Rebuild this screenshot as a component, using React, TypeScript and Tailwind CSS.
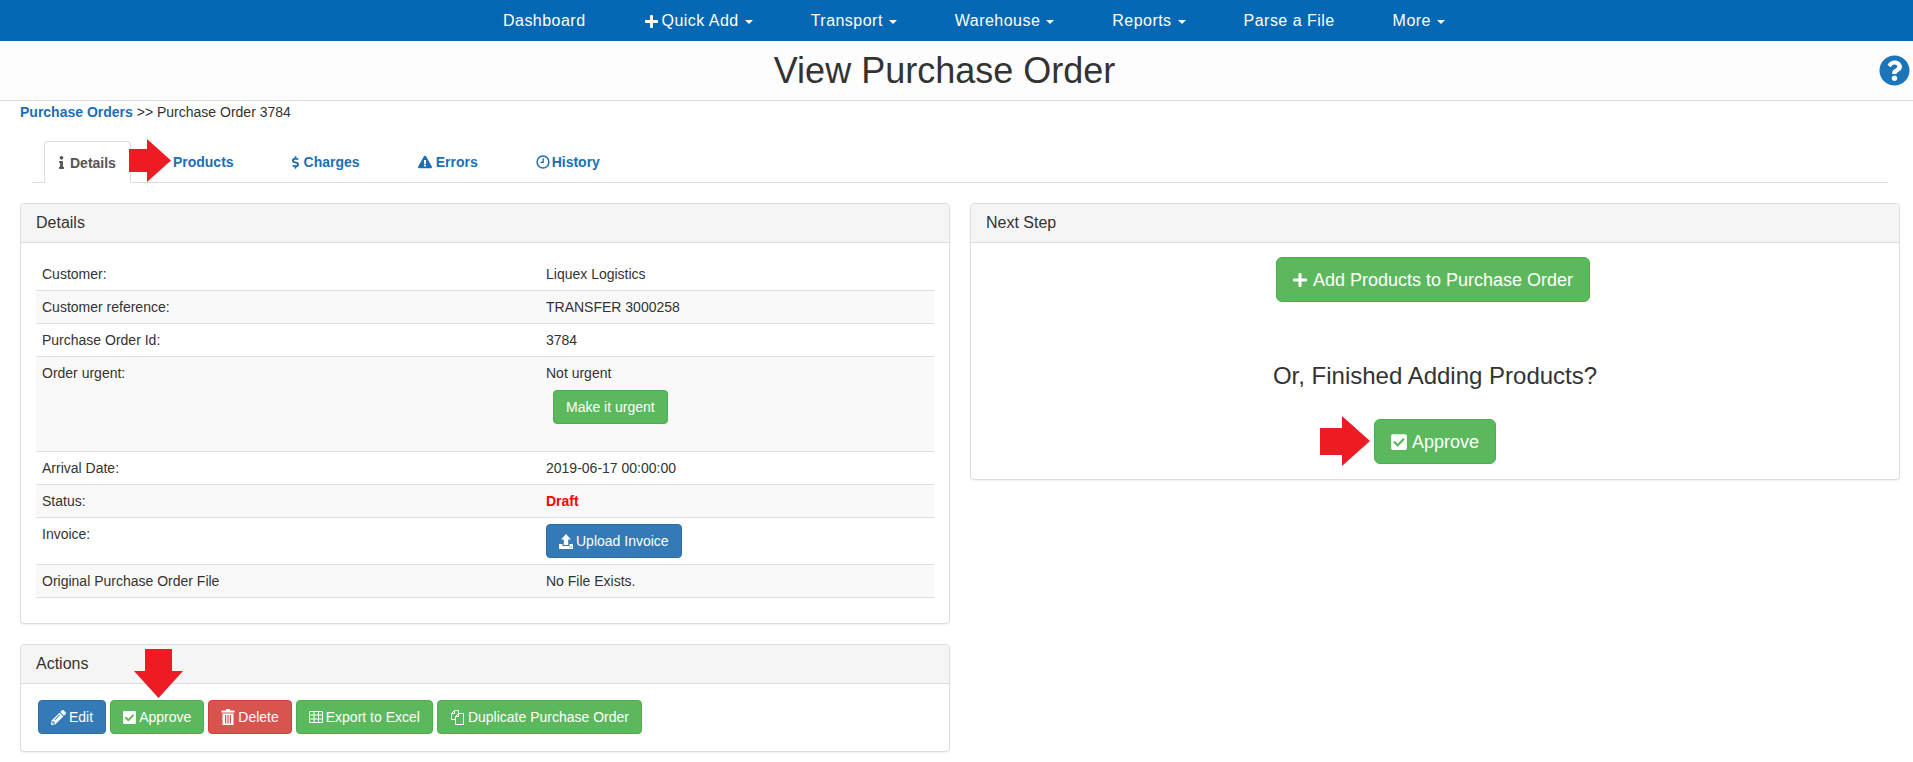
import { FaCheckSquare, FaDollarSign, FaExclamationTriangle, FaInfo, FaPencilAlt, FaPlus, FaQuestionCircle } from "react-icons/fa";

const rowCell = "px-[6px] py-[6px] align-top border-b border-[#ddd] leading-5";
const green = "bg-[#5cb85c] border-[#4cae4c]";
const blue = "bg-[#337ab7] border-[#2e6da4]";
const red = "bg-[#d9534f] border-[#d43f3a]";

// glyphicons the icon packages don't have in this shape
function TrashIcon() {
  return (
    <svg width="14" height="16" viewBox="0 0 14 16" fill="currentColor">
      <path d="M5 0h4v1.5h4.5v2H.5v-2H5z" />
      <path fillRule="evenodd" d="M1.5 4.5h11V16h-11zM4 6v8.5h1.2V6zM6.4 6v8.5h1.2V6zM8.8 6v8.5H10V6z" />
    </svg>
  );
}

function GridIcon() {
  return (
    <svg width="14" height="12" viewBox="0 0 14 12" fill="none" stroke="currentColor">
      <path d="M.5.5h13v11H.5zM.5 4h13M.5 8h13M5 .5v11M9.5.5v11" />
    </svg>
  );
}

function DuplicateIcon() {
  return (
    <svg width="15" height="15" viewBox="0 0 15 15" fill="none" stroke="currentColor">
      <path d="M5 9.5H1.5v-6l3-3h4v3" />
      <path d="M1.5 3.5h3v-3" />
      <path d="M5.5 6.5l3-3h5v11h-8z" />
      <path d="M5.5 6.5h3v-3" />
    </svg>
  );
}

function UploadIcon() {
  return (
    <svg width="14" height="15" viewBox="0 0 14 15" fill="currentColor">
      <path d="M7 0l5 5.5H9.2V11H4.8V5.5H2z" />
      <path fillRule="evenodd" d="M0 10h3.5v2h7v-2H14v5H0zM10.5 12.6v1h1v-1zM12.2 12.6v1h1v-1z" />
    </svg>
  );
}

function ClockIcon() {
  return (
    <svg width="14" height="14" viewBox="0 0 14 14" fill="none" stroke="currentColor">
      <circle cx="7" cy="7" r="5.9" strokeWidth="1.5" />
      <path d="M7.2 3.2V7.4H4.4" strokeWidth="1.3" />
    </svg>
  );
}

function Btn({ color, icon, label, className = "" }: { color: string; icon?: React.ReactNode; label: string; className?: string }) {
  return (
    <button className={`inline-flex items-center justify-center gap-[3px] h-[34px] px-3 rounded border text-white text-sm ${color} ${className}`}>
      {icon}
      {label}
    </button>
  );
}

function NavItem({ label, caret, plus }: { label: string; caret?: boolean; plus?: boolean }) {
  return (
    <a className="flex items-center pt-[1px] px-[29px] text-white text-base tracking-[0.47px] whitespace-nowrap">
      {plus && <FaPlus className="text-[15px] mr-[3px]" />}
      {label}
      {caret && <span className="ml-[6px] mt-[2px] border-x-4 border-t-4 border-x-transparent border-t-white" />}
    </a>
  );
}

function Panel({ title, children, className = "" }: { title: string; children: React.ReactNode; className?: string }) {
  return (
    <div className={`border border-[#ddd] rounded bg-white shadow-[0_1px_1px_rgba(0,0,0,0.05)] ${className}`}>
      <div className="h-[39px] flex items-center px-[15px] bg-[#f5f5f5] border-b border-[#ddd] rounded-t text-base text-[#333]">{title}</div>
      {children}
    </div>
  );
}

function Row({ label, striped, children }: { label: string; striped?: boolean; children: React.ReactNode }) {
  return (
    <tr className={striped ? "bg-[#f9f9f9]" : ""}>
      <td className={`${rowCell} w-[504px]`}>{label}</td>
      <td className={rowCell}>{children}</td>
    </tr>
  );
}

function Tab({ icon, label, gap }: { icon?: React.ReactNode; label: string; gap?: string }) {
  return (
    <a className={`flex items-center pt-[1px] px-[29px] text-[#1b6fb5] font-bold text-sm ${gap ?? ""}`}>
      {icon}
      {label}
    </a>
  );
}

function RightArrow({ className, w, h, shaftTop, shaftBottom, headX }: { className: string; w: number; h: number; shaftTop: number; shaftBottom: number; headX: number }) {
  return (
    <svg className={`absolute ${className}`} width={w} height={h} viewBox={`0 0 ${w} ${h}`}>
      <path d={`M0 ${shaftTop} H${headX} V0 L${w} ${h / 2} L${headX} ${h} V${shaftBottom} H0 Z`} fill="#ed1c24" />
    </svg>
  );
}

export default function App() {
  return (
    <div className="relative min-h-[762px] bg-white text-sm text-[#333]" style={{ fontFamily: '"Liberation Sans", Arial, sans-serif' }}>
      <nav className="h-[41px] bg-[#0468b4] flex pl-[474px]">
        <NavItem label="Dashboard" />
        <NavItem label="Quick Add" caret plus />
        <NavItem label="Transport" caret />
        <NavItem label="Warehouse" caret />
        <NavItem label="Reports" caret />
        <NavItem label="Parse a File" />
        <NavItem label="More" caret />
      </nav>

      <header className="h-[60px] flex items-center bg-[#fdfdfd] border-b border-[#ddd] pl-[10px] pr-[3px]">
        <h1 className="flex-1 text-center text-[36px] leading-10 font-normal">View Purchase Order</h1>
        <FaQuestionCircle className="text-[31px] text-[#1b75bb]" />
      </header>

      <div className="px-5 h-5 pt-[1px] leading-5 text-sm">
        <a className="font-bold text-[#1b6fb5]">Purchase Orders</a> &gt;&gt; Purchase Order 3784
      </div>

      <div className="ml-8 mr-[25px] mt-5 h-[42px] flex border-b border-[#ddd]">
        <a className="flex items-center gap-[6px] ml-3 pt-[1px] pl-[14px] pr-[14px] h-[42px] font-bold text-sm text-[#555] bg-white border border-[#ddd] border-b-white rounded-t">
          <FaInfo className="text-[13px] w-[5px]" />
          Details
        </a>
        <div className="flex ml-[13px]">
          <Tab label="Products" />
          <Tab icon={<FaDollarSign className="text-[13px] w-[7px]" />} label="Charges" gap="gap-[5px]" />
          <Tab icon={<FaExclamationTriangle className="text-sm" />} label="Errors" gap="gap-1" />
          <Tab icon={<ClockIcon />} label="History" gap="gap-[2px]" />
        </div>
      </div>

      <div className="grid grid-cols-2 gap-x-5 pl-5 pr-[13px] mt-5 items-start">
        <div>
          <Panel title="Details">
            <div className="pt-[15px] pb-[25px] px-[15px]">
              <table className="w-full border-collapse">
                <tbody>
                  <Row label="Customer:">Liquex Logistics</Row>
                  <Row label="Customer reference:" striped>TRANSFER 3000258</Row>
                  <Row label="Purchase Order Id:">3784</Row>
                  <Row label="Order urgent:" striped>
                    <div>Not urgent</div>
                    <Btn color={green} label="Make it urgent" className="ml-[7px] mt-[7px] mb-[21px] flex! w-fit" />
                  </Row>
                  <Row label="Arrival Date:">2019-06-17 00:00:00</Row>
                  <Row label="Status:" striped>
                    <span className="font-bold text-[#f00]">Draft</span>
                  </Row>
                  <Row label="Invoice:">
                    <Btn color={blue} icon={<UploadIcon />} label="Upload Invoice" className="flex! w-fit" />
                  </Row>
                  <Row label="Original Purchase Order File" striped>No File Exists.</Row>
                </tbody>
              </table>
            </div>
          </Panel>
          <Panel title="Actions" className="mt-5">
            <div className="flex gap-1 pl-[17px] pt-4 pb-[17px]">
              <Btn color={blue} icon={<FaPencilAlt className="text-[15px]" />} label="Edit" />
              <Btn color={green} icon={<FaCheckSquare className="text-[15px] w-[13px]" />} label="Approve" />
              <Btn color={red} icon={<TrashIcon />} label="Delete" />
              <Btn color={green} icon={<GridIcon />} label="Export to Excel" />
              <Btn color={green} icon={<DuplicateIcon />} label="Duplicate Purchase Order" />
            </div>
          </Panel>
        </div>

        <Panel title="Next Step">
          <div className="flex flex-col items-center pt-[14px] pb-[15px]">
            <button className={`flex items-center gap-[6px] h-[45px] px-4 mr-1 rounded-md border text-white text-lg ${green}`}>
              <FaPlus className="text-base w-[14px]" />
              Add Products to Purchase Order
            </button>
            <h3 className="mt-[61px] text-2xl leading-[26px] font-normal">Or, Finished Adding Products?</h3>
            <button className={`flex items-center gap-[5px] h-[45px] px-4 mt-[30px] rounded-md border text-white text-lg ${green}`}>
              <FaCheckSquare className="text-lg w-4" />
              Approve
            </button>
          </div>
        </Panel>
      </div>

      <RightArrow className="left-[129px] top-[139px]" w={42} h={43} shaftTop={10} shaftBottom={33} headX={18} />
      <RightArrow className="left-[1320px] top-[416px]" w={50} h={50} shaftTop={12} shaftBottom={39} headX={22} />
      <svg className="absolute left-[134px] top-[649px]" width="49" height="49" viewBox="0 0 49 49">
        <path d="M11 0 H38 V22 H49 L24.5 49 L0 22 H11 Z" fill="#ed1c24" />
      </svg>
    </div>
  );
}
